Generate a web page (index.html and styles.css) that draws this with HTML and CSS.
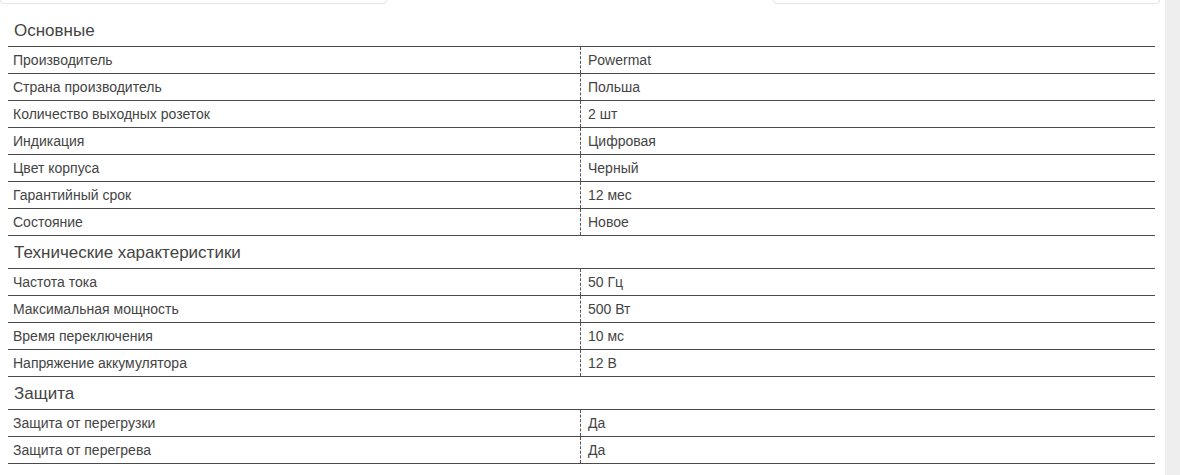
FILE: index.html
```
<!DOCTYPE html>
<html lang="ru">
<head>
<meta charset="utf-8">
<link rel="stylesheet" href="styles.css">
</head>
<body>
<div class="page">
  <div class="tabs">
    <div class="tab"></div>
    <div class="tab active"></div>
    <div class="tab"></div>
  </div>
  <div class="specs">
    <div class="group">Основные</div>
    <div class="row"><div class="k">Производитель</div><div class="v">Powermat</div></div>
    <div class="row"><div class="k">Страна производитель</div><div class="v">Польша</div></div>
    <div class="row"><div class="k">Количество выходных розеток</div><div class="v">2 шт</div></div>
    <div class="row"><div class="k">Индикация</div><div class="v">Цифровая</div></div>
    <div class="row"><div class="k">Цвет корпуса</div><div class="v">Черный</div></div>
    <div class="row"><div class="k">Гарантийный срок</div><div class="v">12 мес</div></div>
    <div class="row"><div class="k">Состояние</div><div class="v">Новое</div></div>
    <div class="group">Технические характеристики</div>
    <div class="row"><div class="k">Частота тока</div><div class="v">50 Гц</div></div>
    <div class="row"><div class="k">Максимальная мощность</div><div class="v">500 Вт</div></div>
    <div class="row"><div class="k">Время переключения</div><div class="v">10 мс</div></div>
    <div class="row"><div class="k">Напряжение аккумулятора</div><div class="v">12 В</div></div>
    <div class="group">Защита</div>
    <div class="row"><div class="k">Защита от перегрузки</div><div class="v">Да</div></div>
    <div class="row"><div class="k">Защита от перегрева</div><div class="v">Да</div></div>
  </div>
</div>
</body>
</html>
```
FILE: styles.css
```
html, body {
  margin: 0;
  padding: 0;
  background: #eeeeee;
}
.page {
  width: 1165px;
  height: 475px;
  background: #ffffff;
  font-family: "Liberation Sans", Arial, sans-serif;
  color: #444444;
  box-sizing: border-box;
  overflow: hidden;
}
.tabs {
  display: flex;
  height: 5px;
  padding-right: 5px;
}
.tab {
  flex: 1;
  height: 3px;
  border: 1px solid #e6e6e6;
  border-top: none;
  border-radius: 0 0 4px 4px;
}
.tab.active {
  border-color: transparent;
}
.specs {
  margin: 9px 10px 0 8px;
}
.group {
  height: 32px;
  line-height: 33px;
  font-size: 17px;
  padding-left: 6px;
  border-bottom: 1px solid #4a4a4a;
}
.row {
  display: flex;
  height: 26px;
  border-bottom: 1px solid #4a4a4a;
  font-size: 14px;
  line-height: 26px;
}
.k {
  width: 567px;
  padding-left: 5px;
  border-right: 1px dashed #555555;
}
.v {
  flex: 1;
  padding-left: 7px;
}
```
